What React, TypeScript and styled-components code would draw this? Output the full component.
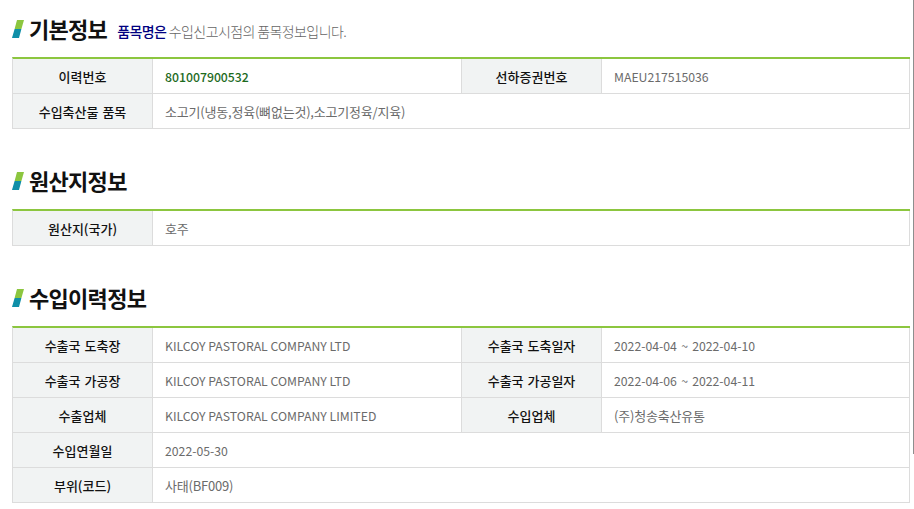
import React from "react";
import styled, { createGlobalStyle } from "styled-components";

const GlobalStyle = createGlobalStyle`
  html, body {
    margin: 0;
    padding: 0;
    background: #fff;
    overflow: hidden;
  }
  body {
    font-family: "Noto Sans CJK KR", "Noto Sans", sans-serif;
  }
`;

interface Field {
  label: string;
  value: string;
  highlight?: boolean;
  hangul?: boolean;
  spaced?: boolean;
}

type Row = Field[];

const basicRows: Row[] = [
  [
    { label: "이력번호", value: "801007900532", highlight: true },
    { label: "선하증권번호", value: "MAEU217515036" },
  ],
  [{ label: "수입축산물 품목", value: "소고기(냉동,정육(뼈없는것),소고기정육/지육)", hangul: true }],
];

const originRows: Row[] = [[{ label: "원산지(국가)", value: "호주", hangul: true }]];

const historyRows: Row[] = [
  [
    { label: "수출국 도축장", value: "KILCOY PASTORAL COMPANY LTD" },
    { label: "수출국 도축일자", value: "2022-04-04 ~ 2022-04-10", spaced: true },
  ],
  [
    { label: "수출국 가공장", value: "KILCOY PASTORAL COMPANY LTD" },
    { label: "수출국 가공일자", value: "2022-04-06 ~ 2022-04-11", spaced: true },
  ],
  [
    { label: "수출업체", value: "KILCOY PASTORAL COMPANY LIMITED" },
    { label: "수입업체", value: "(주)청송축산유통", hangul: true },
  ],
  [{ label: "수입연월일", value: "2022-05-30" }],
  [{ label: "부위(코드)", value: "사태(BF009)", hangul: true }],
];

const TitleMark = () => (
  <MarkIcon width="12" height="18" viewBox="0 0 12 18">
    <polygon points="5,0 12,0 9.4,9 2.6,9" fill="#8cc63f" />
    <polygon points="2.6,9 9.4,9 7,18 0,18" fill="#0f8fa8" />
  </MarkIcon>
);

const InfoTable = ({ rows }: { rows: Row[] }) => (
  <Table>
    <colgroup>
      <col width="140" />
      <col width="309" />
      <col width="140" />
      <col />
    </colgroup>
    <tbody>
      {rows.map((row) => (
        <tr key={row[0].label}>
          {row.map((field) => (
            <React.Fragment key={field.label}>
              <Th>{field.label}</Th>
              <Td
                colSpan={row.length === 1 ? 3 : 1}
                $highlight={field.highlight}
                $hangul={field.hangul}
                $spaced={field.spaced}
              >
                {field.value}
              </Td>
            </React.Fragment>
          ))}
        </tr>
      ))}
    </tbody>
  </Table>
);

export default function App() {
  return (
    <Page>
      <GlobalStyle />
      <Section>
        <TitleRow>
          <TitleMark />
          <Title>기본정보</Title>
          <SubTitle>
            <strong>품목명은</strong> 수입신고시점의 품목정보입니다.
          </SubTitle>
        </TitleRow>
        <InfoTable rows={basicRows} />
      </Section>
      <Section>
        <TitleRow>
          <TitleMark />
          <Title>원산지정보</Title>
        </TitleRow>
        <InfoTable rows={originRows} />
      </Section>
      <Section>
        <TitleRow>
          <TitleMark />
          <Title>수입이력정보</Title>
        </TitleRow>
        <InfoTable rows={historyRows} />
      </Section>
      <ScrollEdge />
    </Page>
  );
}

const Page = styled.div`
  position: relative;
  width: 914px;
  height: 509px;
  padding: 14px 4px 0 12px;
  box-sizing: border-box;
  overflow: hidden;
  display: flex;
  flex-direction: column;
  gap: 37px;
`;

const ScrollEdge = styled.div`
  position: absolute;
  top: 0;
  right: 0;
  width: 1px;
  height: 454px;
  background: #8e8e8e;
`;

const Section = styled.section`
  display: flex;
  flex-direction: column;
`;

const TitleRow = styled.div`
  display: flex;
  align-items: center;
  height: 30px;
  margin-bottom: 13px;
`;

const MarkIcon = styled.svg`
  flex: none;
  margin-right: 5px;
`;

const Title = styled.h2`
  margin: 0 0 2px;
  font-size: 22px;
  line-height: 30px;
  font-weight: 700;
  letter-spacing: -0.7px;
  color: #111;
`;

const SubTitle = styled.p`
  margin: 3px 0 0 10px;
  font-size: 14px;
  line-height: 20px;
  letter-spacing: -0.6px;
  font-weight: 300;
  color: #666;

  strong {
    font-weight: 500;
    color: #000080;
  }
`;

const Table = styled.table`
  width: 898px;
  table-layout: fixed;
  border-collapse: separate;
  border-spacing: 0;
  border-top: 2px solid #8cc63f;
  border-left: 1px solid #dcdcdc;
`;

const Th = styled.th`
  height: 35px;
  padding: 1px 0 0;
  box-sizing: border-box;
  background: #f1f3f3;
  border-right: 1px solid #dcdcdc;
  border-bottom: 1px solid #dcdcdc;
  font-size: 13px;
  font-weight: 500;
  word-spacing: 1px;
  color: #111;
  text-align: center;
`;

const Td = styled.td<{ $highlight?: boolean; $hangul?: boolean; $spaced?: boolean }>`
  height: 35px;
  padding: 1px 12px 0;
  box-sizing: border-box;
  border-right: 1px solid #dcdcdc;
  border-bottom: 1px solid #dcdcdc;
  font-size: ${(p) => (p.$hangul ? "13px" : "12.25px")};
  letter-spacing: ${(p) => (p.$hangul ? "-0.2px" : "0")};
  word-spacing: ${(p) => (p.$spaced ? "1.5px" : "0")};
  font-weight: ${(p) => (p.$highlight ? 500 : 400)};
  color: ${(p) => (p.$highlight ? "#1e6b1e" : "#6b6b6b")};
  text-align: left;
`;
